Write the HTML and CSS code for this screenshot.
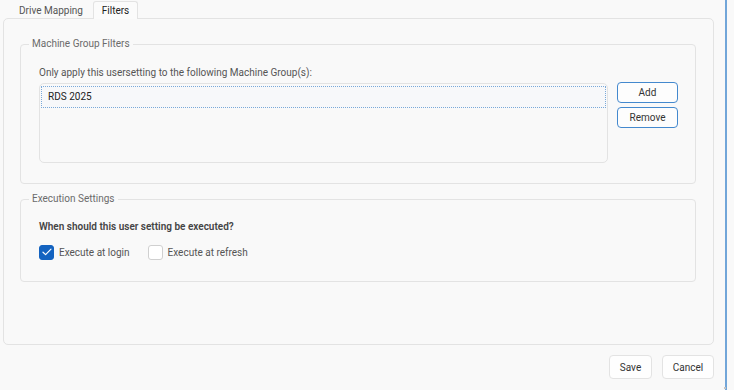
FILE: index.html
```html
<!DOCTYPE html>
<html>
<head>
<meta charset="utf-8">
<link rel="stylesheet" href="styles.css">
</head>
<body>
<div class="window">
  <div class="content">
    <div class="tabs">
      <div class="tab">Drive Mapping</div>
      <div class="tab active">Filters</div>
    </div>
    <div class="panel">
      <fieldset class="group group-machine">
        <legend>Machine Group Filters</legend>
        <div class="label">Only apply this usersetting to the following Machine Group(s):</div>
        <div class="list-row">
          <div class="listbox">
            <div class="item">RDS 2025</div>
          </div>
          <div class="side-buttons">
            <button class="btn btn-blue">Add</button>
            <button class="btn btn-blue">Remove</button>
          </div>
        </div>
      </fieldset>
      <fieldset class="group group-exec">
        <legend>Execution Settings</legend>
        <div class="question">When should this user setting be executed?</div>
        <div class="checks">
          <label class="check"><span class="box checked"><svg width="10" height="8" viewBox="0 0 10 8"><path d="M1 4.2 L3.6 6.6 L9 1.2" fill="none" stroke="#fff" stroke-width="1.2" stroke-linecap="round" stroke-linejoin="round"/></svg></span>Execute at login</label>
          <label class="check"><span class="box"></span>Execute at refresh</label>
        </div>
      </fieldset>
    </div>
    <div class="footer">
      <button class="btn">Save</button>
      <button class="btn btn-cancel">Cancel</button>
    </div>
  </div>
  <div class="edge"></div>
</div>
</body>
</html>
```
FILE: styles.css
```css
* { box-sizing: border-box; }
html, body { margin: 0; padding: 0; }
body {
  width: 734px;
  height: 390px;
  background: #f9f9f9;
  font-family: Roboto, "Open Sans", sans-serif;
  font-size: 10px;
  color: #333;
  overflow: hidden;
}
.window {
  display: flex;
  height: 390px;
  position: relative;
}
.content {
  width: 725px;
  display: flex;
  flex-direction: column;
}
.edge {
  width: 2px;
  background: #72a6d9;
}
.window::after {
  content: "";
  position: absolute;
  right: 8px;
  bottom: 1px;
  width: 2px;
  height: 2px;
  background: #c4c4c4;
}
.tabs {
  display: flex;
  height: 18px;
  padding-left: 19px;
  gap: 10px;
  align-items: stretch;
}
.tab {
  white-space: nowrap;
  line-height: 18px;
  padding-top: 2px;
  color: #555;
  width: 64px;
  text-align: center;
}
.tab.active {
  width: 45px;
  background: #fbfbfb;
  border: 1px solid #e3e3e3;
  border-bottom: none;
  border-radius: 3px 3px 0 0;
  line-height: 17px;
  padding-top: 0;
  color: #222;
  position: relative;
  top: 1px;
  z-index: 1;
}
.panel {
  margin-left: 3px;
  width: 711px;
  height: 327px;
  border: 1px solid #e3e3e3;
  border-radius: 5px;
  background: #f9f9f9;
  padding: 18px 17px 0 16px;
  display: flex;
  flex-direction: column;
  gap: 8px;
}
.group {
  margin: 0;
  border: 1px solid #e3e3e3;
  border-radius: 4px;
  padding: 0 17px 0 18px;
  min-width: 0;
}
.group legend {
  color: #6b6b6b;
  padding: 0 3px;
  margin-left: -10px;
  line-height: 14px;
}
.group-machine { height: 147px; }
.group-exec { height: 90px; }
.label {
  margin-top: 14px;
  line-height: 16px;
  color: #555;
}
.list-row {
  display: flex;
  margin-top: 2px;
  gap: 9px;
}
.listbox {
  width: 569px;
  height: 80px;
  border: 1px solid #e3e3e3;
  border-radius: 5px;
  background: #f9f9f9;
  padding: 2px 1px;
}
.item {
  height: 22px;
  border: 1px dotted #7aa9d9;
  line-height: 20px;
  padding-left: 6px;
  color: #222;
  background: #f7f8fa;
}
.side-buttons {
  display: flex;
  flex-direction: column;
  gap: 4px;
  margin-top: -1px;
}
.btn {
  font-family: inherit;
  font-size: 10px;
  color: #333;
  background: #fdfdfd;
  border: 1px solid #e0e0e0;
  border-radius: 4px;
  padding: 0;
  cursor: default;
}
.btn-blue {
  width: 61px;
  height: 21px;
  border-color: #4489ce;
}
.question {
  margin-top: 13px;
  font-weight: 600;
  line-height: 16px;
  color: #444;
}
.checks {
  display: flex;
  margin-top: 9px;
  gap: 18px;
}
.check {
  display: flex;
  align-items: center;
  gap: 5px;
  color: #555;
  height: 16px;
}
.box {
  width: 15px;
  height: 15px;
  border: 1px solid #d0d0d0;
  border-radius: 3px;
  background: #fff;
  display: flex;
  align-items: center;
  justify-content: center;
}
.box.checked {
  background: #1463c0;
  border-color: #1463c0;
}
.footer {
  display: flex;
  justify-content: flex-end;
  gap: 10px;
  padding-top: 10px;
  padding-right: 11px;
}
.footer .btn {
  width: 43px;
  height: 24px;
  border-color: #e3e3e3;
  background: #fefefe;
}
.footer .btn-cancel { width: 52px; }
```
